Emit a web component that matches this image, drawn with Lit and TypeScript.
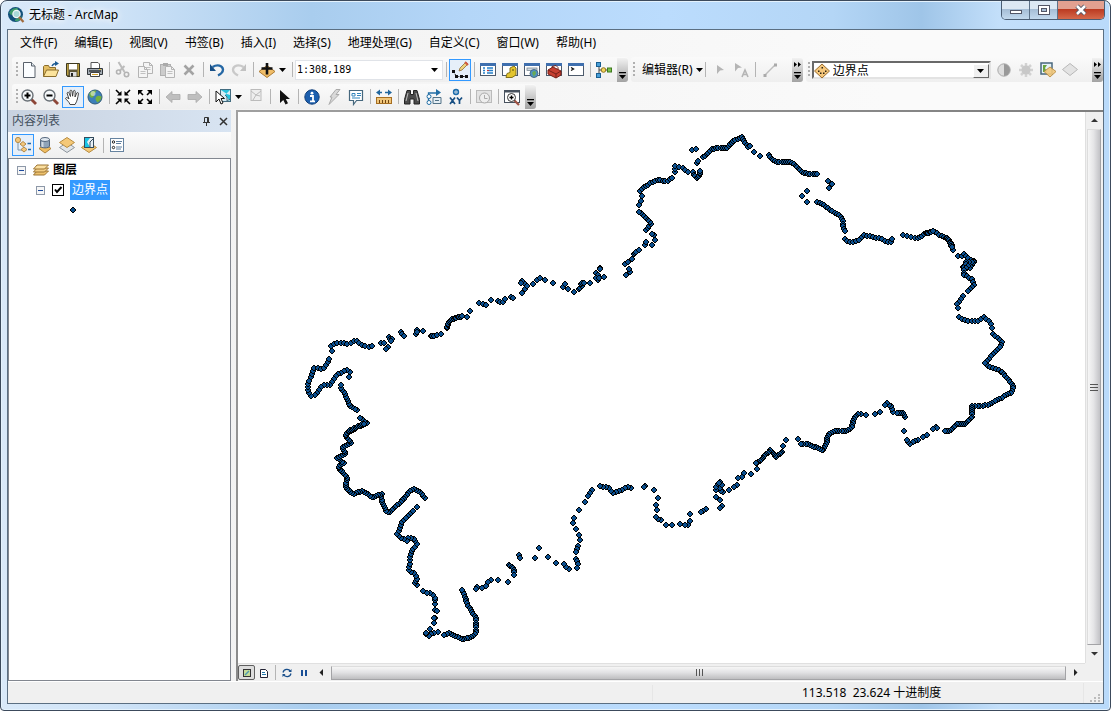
import { LitElement, html, svg, css } from "lit";
import { customElement, state } from "lit/decorators.js";
import { classMap } from "lit/directives/class-map.js";

type Icon = unknown;
type Item = "sep" | { label: string; icon: Icon; on?: boolean; off?: boolean; caret?: boolean };

const windowIcon = (body: Icon): Icon => svg`
  <rect x=".5" y="1.500" width="15" height="12" fill="#fff" stroke="#4d5a6b"/>
  <rect x="0" y="1" width="16" height="3" fill="#3f6fae"/>${body}`;
const page = (x: number, y: number, c: string): Icon => svg`
  <path d="M${x} ${y}h6l3 3v8h-9z" fill="#f4f4f4" stroke="${c}"/><path d="M${x + 6} ${y}v3h3" fill="none" stroke="${c}"/>
  <path d="M${x + 2} ${y + 5}h5M${x + 2} ${y + 7}h5" stroke="${c}" stroke-width=".8"/>`;
const lens = (body: Icon): Icon => svg`
  <path d="M10 10l5 5" stroke="#8d4638" stroke-width="2.800"/>
  <circle cx="6.500" cy="6.500" r="5.500" fill="#f5f8fa" stroke="#6a7177" stroke-width="1.400"/>${body}`;
const plus = svg`<path d="M3.500 6.500h6M6.500 3.500v6" stroke="#000" stroke-width="2"/>`;
const layer = (y: number, a: string, b: string): Icon =>
  svg`<path d="M8 ${y}l7.500 5-7.500 5-7.500-5z" fill="${a}" stroke="${b}"/>`;

const I = {
  logo: svg`<circle cx="7.500" cy="7.500" r="7.500" fill="#12507a"/><path d="M1 6c2-4 5-5 8-5 2 1 1 3-1 3s-2 4-4 4-2-2-3-2zM7 13c1-2 5-2 7-4-1 4-4 6-7 5z" fill="#3d9a6a"/><circle cx="8.500" cy="7" r="3.600" fill="#a9d9d8" stroke="#f2f6f8" stroke-width="1.300"/><path d="M11 10l4.500 5" stroke="#a06a3c" stroke-width="2.200"/>`,
  new: svg`<path d="M2.500 .5h8l3.500 3.500v11.500h-11.500z" fill="#fbfdff" stroke="#59616b"/><path d="M10.500 .5v3.500h3.500" fill="#dfe7ee" stroke="#59616b"/>`,
  open: svg`<path d="M.5 14.500v-10l1-1h4l1 2h6v3" fill="#e3bd62" stroke="#8a6d2c"/><path d="M.5 14.500l3-6.500h12l-2.500 6.500z" fill="#fbe39c" stroke="#8a6d2c"/><path d="M9 4c1-2 2-2.500 4-2.500" stroke="#1d5b93" stroke-width="1.500" fill="none"/><path d="M12 -1l4 2.500-4 2.500z" fill="#1d5b93"/>`,
  save: svg`<path d="M1.500 1.500h13v13h-12l-1-1z" fill="#5d5537" stroke="#3d381f"/><rect x="4" y="2" width="8" height="5.500" fill="#fff"/><rect x="2" y="2" width="1.500" height="11" fill="#b89d42"/><rect x="12.500" y="2" width="1.500" height="12" fill="#b89d42"/><rect x="5" y="10" width="6.500" height="4.500" fill="#ddd"/><rect x="6" y="11" width="2" height="3.500" fill="#222"/>`,
  print: svg`<path d="M4 6v-5.500h7l1.500 1.500v4" fill="#fff" stroke="#555"/><path d="M.5 6.500h15v6h-15z" fill="#a3abb3" stroke="#33383d"/><path d="M2 9h12" stroke="#33383d" stroke-width="1.500"/><path d="M3.500 10.500h9v4h-9z" fill="#fff" stroke="#444"/><path d="M5 12.500h6" stroke="#d3a02b"/><rect x="12" y="7" width="2" height="1" fill="#e4c43d"/>`,
  cut: svg`<path d="M3.500 0l6 10M9.500 4l-5 5" stroke="#bcbcbc" stroke-width="2"/><circle cx="3.500" cy="10" r="2" fill="none" stroke="#b3b3b3" stroke-width="1.600"/><circle cx="11.500" cy="12.500" r="2.200" fill="none" stroke="#b3b3b3" stroke-width="1.600"/>`,
  copy: svg`${page(6.5, 0.5, "#b4b4b4")}${page(1.5, 4.5, "#b4b4b4")}`,
  paste: svg`<rect x="1.500" y="2.500" width="10" height="11" fill="#ccc" stroke="#b0b0b0"/><rect x="4" y="1" width="5" height="3" fill="#aaa"/>${page(6.5, 4.5, "#b4b4b4")}`,
  del: svg`<path d="M3.500 3.500l9 9M12.500 3.500l-9 9" stroke="#a3a3a3" stroke-width="2.600"/>`,
  undo: svg`<path d="M3.500 5c5-3 10-1.500 10.500 2.500 0 3-2 4.500-5 6" fill="none" stroke="#2568a5" stroke-width="2.300"/><path d="M1 2v7h6z" fill="#184f86"/>`,
  redo: svg`<path d="M12.500 5c-5-3-10-1.500-10.500 2.500 0 3 2 4.500 5 6" fill="none" stroke="#c9c9c9" stroke-width="2.300"/><path d="M15 2v7h-6z" fill="#c2c2c2"/>`,
  add: svg`<path d="M8 3.500l8 6-8 6-8-6z" fill="#f0bd68" stroke="#ad7b32"/><path d="M8 1v11.500M2.500 6.500h11" stroke="#111" stroke-width="2.600"/>`,
  editor: svg`<path d="M1.500 9.500l3 5h9.500" fill="none" stroke="#111" stroke-dasharray="2 1"/><path d="M0 8h3v3h-3zM3 13h3v3h-3zM8 13h3v3h-3zM13 13h3v3h-3z" fill="#111"/><path d="M7 9l1-3 6-6 2 2-6 6z" fill="#eed27c" stroke="#8d6b32" stroke-width=".8"/><path d="M13 0l3 3" stroke="#d2593f" stroke-width="2"/>`,
  toc: windowIcon(svg`<path d="M3 6h2M3 8.500h2M3 11h2M7 6h6M7 8.500h6M7 11h6" stroke="#2680c9" stroke-width="1.300"/><path d="M7 8.500h2" stroke="#c33"/>`),
  catalog: windowIcon(svg`<path d="M8 6l4-2 2 2v7l-4 2.500h-6l1-4 3-1z" fill="#e3c52e" stroke="#85721a"/><circle cx="11" cy="8" r="1" fill="#85721a"/>`),
  search: windowIcon(svg`<rect x="3" y="6" width="10" height="2.500" fill="#d3dae0" stroke="#7b8894" stroke-width=".8"/><circle cx="10" cy="11.500" r="4" fill="#4d91c6" stroke="#496b86"/><path d="M8 11c2-3 4-2 4 0s-2 2-2 4z" fill="#68a958"/>`),
  toolbox: windowIcon(svg`<path d="M2 8l5-3 8 4v4l-5 3-8-4z" fill="#c73f31" stroke="#762119"/><path d="M2 8l8 4 5-3M10 12v4M6 6v-1.500l4-1 2 2v2" fill="none" stroke="#762119"/>`),
  python: windowIcon(svg`<path d="M3 5.500l2.500 1.500-2.500 1.500" fill="none" stroke="#111" stroke-width="1.300"/>`),
  model: svg`<path d="M3 3v10M3 8h10" stroke="#444"/><rect x="0.500" y="0.500" width="4" height="4" fill="#499fd8" stroke="#195f91"/><rect x="0.500" y="11.500" width="4" height="4" fill="#499fd8" stroke="#195f91"/><circle cx="7.500" cy="8" r="2.300" fill="#f5d65b" stroke="#8f7420"/><rect x="11.500" y="6" width="4" height="4" fill="#7ec24c" stroke="#3e7a1e"/>`,
  arrowOff: svg`<path d="M5 3l7 5-4 .5-3 3.500z" fill="#b5b5b5"/>`,
  arrowA: svg`<path d="M1 1l7 4.500-4 .5-3 3.500z" fill="#b5b5b5"/><path d="M8 15l3-7 3 7M9 12.500h4" stroke="#b5b5b5" stroke-width="1.600" fill="none"/>`,
  segment: svg`<path d="M3 13l10-10" stroke="#bdbdbd" stroke-width="1.500"/><rect x="1.500" y="12" width="3" height="3" fill="#aaa"/><rect x="12" y="1.500" width="3" height="3" fill="#aaa"/>`,
  contrast: svg`<circle cx="8" cy="8" r="6.200" fill="#ddd" stroke="#aaa"/><path d="M8 2a6 6 0 0 1 0 12z" fill="#999"/>`,
  bright: svg`<path d="M8 1v14M1 8h14M3 3l10 10M13 3l-10 10" stroke="#d2d2d2" stroke-width="2.500"/><circle cx="8" cy="8" r="4.500" fill="#c8c8c8"/>`,
  image: svg`<rect x="1" y="1" width="11" height="11" fill="#e7f2f8" stroke="#48677e" stroke-width="1.500"/><path d="M3 3h4l-2 3 2 4h-4z" fill="#68a33e"/><path d="M10 5l6 4.500-6 5.500-6-5.500z" fill="#f3c87a" stroke="#b98c40" opacity=".9"/>`,
  rhomb: svg`<path d="M8 1.500l7.500 6-7.500 6-7.500-6z" fill="#e3e3e3" stroke="#b8b8b8"/>`,
  zoomIn: lens(plus),
  zoomOut: lens(svg`<path d="M3.500 6.500h6" stroke="#000" stroke-width="2"/>`),
  pan: svg`<path d="M5 15.500c-1-3-3-4-4.500-6 .5-1.500 2-1 3.500.5l-2-6c.8-1.300 1.800-.8 2.200.5l1.300 3-.6-5.500c.6-1.300 1.800-1 2 .2l.7 5 .7-5.200c.8-1 1.900-.7 1.900.5l-.2 5.500 1.800-4c1-.9 2-.2 1.600 1-.6 3-1 7-3.400 10.500z" fill="#fff" stroke="#333" stroke-width=".9"/>`,
  globe: svg`<circle cx="8" cy="8" r="7" fill="#3c7fb9" stroke="#315b78"/><path d="M2 5c2-3 5-4 7-3.500 1 2-2 2-2 4s-1 4-3 3-1-2-2-3.500zM9 8c2-2 4-1 5.500-.5 0 3-2 5-4 6-2-2-2.500-4-1.500-5.500z" fill="#73b03f"/><circle cx="6" cy="4.500" r="2.500" fill="#fff" opacity=".5"/>`,
  shrink: svg`<path d="M1 1l4 4M15 1l-4 4M1 15l4-4M15 15l-4-4" stroke="#000" stroke-width="1.600"/><path d="M6.500 2v4.500h-4.500zM9.500 2v4.500h4.500zM6.500 14v-4.500h-4.500zM9.500 14v-4.500h4.500z"/>`,
  grow: svg`<path d="M2 2l4 4M14 2l-4 4M2 14l4-4M14 14l-4-4" stroke="#000" stroke-width="1.600"/><path d="M1 1h5l-5 5zM15 1h-5l5 5zM1 15h5l-5-5zM15 15h-5l5-5z"/>`,
  back: svg`<path d="M1 8l6-5.500v3h8v5h-8v3z" fill="#bfbfbf" stroke="#aaa" stroke-width=".8"/>`,
  fwd: svg`<path d="M15 8l-6-5.500v3h-8v5h8v3z" fill="#bfbfbf" stroke="#aaa" stroke-width=".8"/>`,
  select: svg`<rect x="5.500" y=".5" width="10" height="12" fill="#d8edf4" stroke="#426c80"/><path d="M6 1h9l-5 5 5 6v-6l-3-1z" fill="#27c2dd"/><path d="M10 6l2 2v4l3-2" stroke="#426c80" fill="none"/><path d="M1 2v11l3-3 2 5 2-1-2-4.500h3.500z" fill="#fff" stroke="#111"/>`,
  clear: svg`<rect x="3" y="0.500" width="10" height="11" fill="#eee" stroke="#bbb"/><path d="M3 2l5 4-3 5M8 6l5-4M8 6l4 1" stroke="#bbb" fill="none"/>`,
  pointer: svg`<path d="M4 1v13l3.300-3 2.200 4.500 2.500-1.200-2.200-4.300h4.200z" fill="#111"/>`,
  info: svg`<circle cx="8" cy="8" r="7.200" fill="#1c5fae" stroke="#113f7a"/><circle cx="8" cy="4.200" r="1.400" fill="#fff"/><path d="M6 7h3v5M6 12.300h5" stroke="#fff" stroke-width="1.800" fill="none"/>`,
  bolt: svg`<path d="M10 .5h4l-4 5h3l-10 10 3-7.500h-2z" fill="#d9d9d9" stroke="#aaa"/>`,
  popup: svg`<path d="M1.500 1.500h13v10h-6l-3 4v-4h-4z" fill="#fff" stroke="#46687e" stroke-width="1.200"/><path d="M4 4.500h3v2.500h-3zM9 4.500h4M9 6.500h4M4 9h8" stroke="#3285bd" fill="none"/>`,
  measure: svg`<path d="M2 3.500h12" stroke="#22679e" stroke-width="1.600" stroke-dasharray="4 3"/><path d="M0 3.500l4-3v6zM16 3.500l-4-3v6z" fill="#22679e"/><rect x=".5" y="8.500" width="15" height="6" fill="#f0c579" stroke="#a66e21"/><path d="M3.500 11v3M6.500 11v3M9.500 11v3M12.500 11v3" stroke="#6f4511"/>`,
  find: svg`<path d="M3 1.500h3.500v4h3v-4h3.500l2.500 9v4.500h-5.500v-5h-4v5h-5.500v-4.500z" fill="#4b4b4b" stroke="#222"/><path d="M4 4l-2 8M12 4l2 8" stroke="#bbb"/>`,
  route: svg`<path d="M2.500 13v-9h9" stroke="#236fa6" fill="none" stroke-width="1.300"/><path d="M10 0l5 3.500-5 3.500z" fill="#236fa6"/><circle cx="3" cy="7.500" r="2" fill="#fff" stroke="#236fa6"/><circle cx="3" cy="13.500" r="2" fill="#fff" stroke="#236fa6"/><path d="M7 8.500h8v6h-8z" fill="#e5eef4" stroke="#527287"/><path d="M9 11.500h4" stroke="#527287"/>`,
  xy: svg`<circle cx="8" cy="3" r="2.400" fill="none" stroke="#1c6cab" stroke-width="1.600"/><circle cx="8" cy="3" r=".8" fill="#1c6cab"/><path d="M2 8.500l5 6.500M7 8.500l-5 6.500M9 8.500l2.500 3 2.500-3M11.500 11v4" stroke="#174f83" stroke-width="1.700" fill="none"/>`,
  time: svg`<rect x=".5" y="1.500" width="15" height="12" fill="#e3e3e3" stroke="#bbb"/><circle cx="8.500" cy="9" r="5" fill="#eee" stroke="#aaa"/><path d="M8.500 6v3.500h3" stroke="#aaa" fill="none"/>`,
  viewer: svg`<rect x=".5" y="1.500" width="15" height="12" fill="#fff" stroke="#47515d"/><path d="M1 2.500h14" stroke="#47515d" stroke-width="2"/><path d="M10 11l5 5" stroke="#a05242" stroke-width="2.200"/><circle cx="7.500" cy="8.500" r="4" fill="#fff" stroke="#333"/><path d="M5.500 8.500h4M7.500 6.500v4" stroke="#000" stroke-width="1.400"/>`,
  listOrder: svg`<path d="M3 4v9h5M5 7h4" stroke="#7d93a8" fill="none"/><circle cx="3" cy="3" r="2.600" fill="#f3c77c" stroke="#b48b49"/><path d="M8 4.500l3 2.500-3 2.500-3-2.500zM9 10l3 2.500-3 2.500-3-2.500z" fill="#f3c77c" stroke="#b48b49"/><path d="M12.500 6.500h3.500M13 12.500h3" stroke="#2568a5" stroke-width="1.500"/>`,
  listSource: svg`<path d="M8 7l6 4.500-6 4.500-6-4.500z" fill="#f0bd61" stroke="#b0833a"/><path d="M3.500 2.500v6.500c0 2.500 9 2.500 9 0v-6.500z" fill="#8fa3b8" stroke="#55677d"/><ellipse cx="8" cy="2.500" rx="4.500" ry="2" fill="#e0e8f0" stroke="#55677d"/><path d="M5.500 5v5" stroke="#fff" stroke-width="2" opacity=".6"/>`,
  listVisible: svg`${layer(5.5, "#e1e5e8", "#8e969e")}${layer(0.5, "#f4c878", "#b88d42")}`,
  listSelected: svg`${layer(5.5, "#f4c878", "#b88d42")}<rect x="3.500" y=".5" width="9" height="10" fill="#e7eff5" stroke="#344b5c"/><path d="M4 1h5l-3 4 3 5h-5z" fill="#19c3e5"/><path d="M9 5l3-3M9 5v5" stroke="#344b5c"/>`,
  options: svg`<rect x="1.500" y="1.500" width="13" height="13" fill="#fff" stroke="#6683a0"/><circle cx="4.500" cy="5" r="1.200" fill="none" stroke="#222"/><circle cx="4.500" cy="10.500" r="1.200" fill="none" stroke="#222"/><path d="M7 4.500h6M7 6.500h5M7 10h6M7 12h5" stroke="#5f7f9f"/>`,
  layers: svg`<path d="M4 9h11.500l-4 4h-11z" fill="#eec26e" stroke="#9c7432"/><path d="M4 6h11.500l-4 4h-11z" fill="#f4cf86" stroke="#9c7432"/><path d="M4 3h11.500l-4 4h-11z" fill="#fbdf9f" stroke="#9c7432"/>`,
  points: svg`<path d="M8 1l7.500 7-7.500 7-7.500-7z" fill="#f5c77c" stroke="#9b6e2e"/><path d="M7.500 4h1.500v1.500h-1.500zM4 7.500h1.500v1.500h-1.500zM11 7.500h1.500v1.500h-1.500zM6 9.500h1.500v1.500h-1.500zM9 9.500h1.500v1.500h-1.500z" fill="#2b2111"/>`,
};

const NEW = (label: string, icon: Icon, extra = {}): Item => ({ label, icon, ...extra });
const off = { off: true };

const FILE_BAR: Item[] = [
  NEW("新建", I.new), NEW("打开", I.open), NEW("保存", I.save), NEW("打印", I.print), "sep",
  NEW("剪切", I.cut, off), NEW("复制", I.copy, off), NEW("粘贴", I.paste, off), NEW("删除", I.del, off), "sep",
  NEW("撤消", I.undo), NEW("恢复", I.redo, off), "sep",
  NEW("添加数据", I.add, { caret: true }), "sep",
];
const WINDOW_BAR: Item[] = [
  "sep", NEW("编辑器工具条", I.editor, { on: true }), "sep",
  NEW("内容列表", I.toc), NEW("目录", I.catalog), NEW("搜索", I.search), NEW("工具箱", I.toolbox), NEW("Python", I.python), "sep",
  NEW("模型构建器", I.model),
];
const EDIT_BAR: Item[] = ["sep", NEW("编辑", I.arrowOff, off), NEW("编辑注记", I.arrowA, off), "sep", NEW("直线段", I.segment, off)];
const EFFECT_BAR: Item[] = [NEW("对比度", I.contrast, off), NEW("亮度", I.bright, off), NEW("透明度", I.image), NEW("卷帘", I.rhomb, off)];
const TOOLS_BAR: Item[] = [
  NEW("放大", I.zoomIn), NEW("缩小", I.zoomOut), NEW("平移", I.pan, { on: true }), NEW("全图", I.globe), "sep",
  NEW("固定比例放大", I.shrink), NEW("固定比例缩小", I.grow), "sep",
  NEW("上一视图", I.back, off), NEW("下一视图", I.fwd, off), "sep",
  NEW("选择要素", I.select, { caret: true }), NEW("清除选择", I.clear, off), "sep",
  NEW("选择元素", I.pointer), "sep",
  NEW("识别", I.info), NEW("超链接", I.bolt, off), NEW("HTML 弹出窗口", I.popup), "sep",
  NEW("测量", I.measure), "sep",
  NEW("查找", I.find), NEW("查找路径", I.route), NEW("转到 XY", I.xy), "sep",
  NEW("时间滑块", I.time, off), "sep",
  NEW("查看器窗口", I.viewer),
];
const LIST_BAR: Item[] = [
  NEW("按绘制顺序列出", I.listOrder, { on: true }), NEW("按源列出", I.listSource), NEW("按可见性列出", I.listVisible),
  NEW("按选择列出", I.listSelected), "sep", NEW("选项", I.options),
];
const MENUS = ["文件(F)", "编辑(E)", "视图(V)", "书签(B)", "插入(I)", "选择(S)", "地理处理(G)", "自定义(C)", "窗口(W)", "帮助(H)"];

/* Boundary runs: marker spacing, then vertices. Spacing 0 places a marker on each vertex only. */
const RUNS: [number, string][] = [
  [3.5, "331,346 335,343 344,343 348,344 352,342 356,340 358,342 362,345 367,347 374,346"],
  [0, "332,351 381,343 384,343 389,337 390,339 392,339 391,341 388,347 386,349 401,332 402,334 404,336 417,330 423,331 416,334 417,332 431,336 432,336 434,336 437,335 441,334"],
  [1.5, "447,328 448,324 451,320 455,318 460,317 463,316"],
  [0, "467,317 470,311 479,303 483,304 486,305 491,300 498,301 500,302 503,302 505,299 511,297 513,298 522,293 525,289 527,286 524,283 522,281 521,283 533,284 537,280 540,278 545,280 553,283 563,287 565,284 568,289 574,292"],
  [2, "579,289 582,286 581,284 586,282"],
  [0, "590,283 598,280 596,273 598,275 600,268 600,269 604,277 596,278 599,278 626,275 630,272 629,269 625,264 628,262 632,259 634,254 635,253 636,252 639,250 645,245 646,242 652,245 655,240 654,235 652,234"],
  [2.5, "646,230 651,224 647,219 643,215 638,211"],
  [0, "639,205 641,201 642,196"],
  [2.6, "640,191 644,187 649,184 654,182 658,180 662,181 667,181 670,179 674,178"],
  [0, "675,172 675,169 675,166 679,167 683,168 685,170 688,172 693,172 697,163 698,161 692,150 696,149"],
  [1.8, "694,175 697,178 700,175 700,170"],
  [2.3, "703,157 707,154 712,149 717,148 727,148 730,145 733,141 738,139 742,137 745,142 748,147 750,146"],
  [0, "754,152 760,156 828,181 832,184 829,188 807,191 802,196 807,202"],
  [2.2, "769,155 772,159 777,162 791,162 795,165 800,170 804,173 810,174 819,174"],
  [2.6, "817,202 821,203 825,206 832,211 837,214 842,217 843,225 845,232"],
  [3.2, "845,239 848,242 853,242 859,240 864,235 873,237 882,239 890,243 893,237"],
  [4, "903,235 909,237 913,238 918,238"],
  [2.4, "918,238 925,234 933,231 940,235 947,238 951,243 953,250"],
  [1.5, "927,233 933,231"],
  [1.5, "947,238 950,242 952,248"],
  [0, "958,256"],
  [3, "962,256 964,254 968,258 975,262 966,264 962,267 970,268 974,262 965,262 968,267 964,270 964,275"],
  [3, "964,275 972,279 974,284 967,292"],
  [3.5, "963,296 957,304 958,309"],
  [3.4, "959,317 967,321 978,321 983,317 990,322 992,328"],
  [3.1, "993,334 997,337 1002,341 1001,346 993,354 985,363 989,367 997,369 1002,372"],
  [2.6, "1002,372 1008,379 1014,387 1012,392 997,400 990,404 982,406 972,406"],
  [2.1, "972,406 972,417 965,424 957,424 950,431 943,431"],
  [0, "936,427 937,428 933,429 927,435 923,437 918,440 904,431"],
  [2.8, "915,441 910,444 905,438"],
  [2, "905,417 903,413 897,413"],
  [3, "893,412 892,407 887,403 884,406"],
  [0, "880,412 875,414 866,415 861,414"],
  [2.2, "858,414 854,418 852,427 846,431 835,431 828,435 826,445 823,451 815,447 807,444 800,444"],
  [0, "798,439 786,440 783,446 757,469 751,474 744,473 742,477 738,478 737,485 734,487 729,490 723,492 721,491 720,488 716,490 716,487 720,482 722,485 718,484 719,483 716,497 720,500 722,506 720,508 706,509 703,511 701,512"],
  [1.6, "782,452 776,457 770,450 763,458 755,464"],
  [0, "690,514 690,521 688,525 685,525 680,524 672,525 666,525 661,520 658,519 656,517 657,510 656,505 658,498 654,490 645,486 644,487"],
  [3.2, "631,488 628,487 621,490 613,493 608,487 598,486"],
  [0, "592,490 590,493 588,496 585,502 579,510 574,518 573,523 576,529 579,535 580,540 578,546 577,549 576,552 576,559 577,561 578,564 577,568 569,569 566,567 564,564 556,563 548,557 539,548 535,558 519,555 520,558"],
  [1.8, "509,565 513,568 515,573"],
  [0, "514,575 508,582 498,580 491,580 488,582 486,586 482,588 477,587 476,589"],
  [2.4, "462,590 468,605 476,618 476,633 472,637 462,639 450,633 443,635"],
  [0, "462,590 438,632 434,633 431,634 429,636 426,634 426,633 430,629 434,623 435,618 434,618 435,610 437,611 435,604 435,600 435,598 433,595 430,593 427,593 423,591"],
  [3.1, "417,585 414,582 417,580 415,574 409,570 410,559 412,550 417,545 414,539 408,538 407,541 403,539 397,534 399,530 402,522 408,516 413,511"],
  [0, "417,507"],
  [2.4, "425,498 420,492 413,489 407,494 402,501 397,505 390,512 387,512 382,502 381,496"],
  [2.2, "382,494 372,497 362,491 353,494 346,488 347,477 338,467 344,463 337,458 346,453 342,448 351,443 345,435 357,427 367,423 359,417"],
  [1.5, "349,431 357,427 365,423"],
  [2.6, "357,410 350,406 345,393 341,388 341,385"],
  [0, "349,377"],
  [3.4, "350,372 347,370 341,373 337,374 335,378 330,385 324,385 320,388 315,395 311,396 308,392 308,383 312,375 314,368 322,369 327,365 330,357"],
];
const MARK = "m-1-3h2v1h1v1h1v2h-1v1h-1v1h-2v-1h-1v-1h-1v-2h1v-1h1z";
const CORE = "m-1-2h2v1h1v2h-1v1h-2v-1h-1v-2h1z";

function markers(): [number, number][] {
  const out: [number, number][] = [];
  for (const [step, text] of RUNS) {
    const v = text.split(" ").map((p) => p.split(",").map(Number));
    if (!step) {
      v.forEach(([x, y]) => out.push([x, y]));
      continue;
    }
    let left = 0;
    for (let i = 1; i < v.length; i++) {
      const [ax, ay] = v[i - 1];
      const dx = v[i][0] - ax;
      const dy = v[i][1] - ay;
      const len = Math.hypot(dx, dy);
      let d = left;
      for (; d <= len; d += step) out.push([Math.round(ax + (dx * d) / len), Math.round(ay + (dy * d) / len)]);
      left = d - len;
    }
  }
  return out;
}

const glyph = (icon: Icon) => html`<svg class="ic" viewBox="0 0 16 16" aria-hidden="true">${icon}</svg>`;
const down = html`<svg class="tri" viewBox="0 0 7 4" aria-hidden="true"><path d="M0 0h7l-3.500 4z"/></svg>`;

const shared = css`
  :host { box-sizing: border-box; }
  *, *::before, *::after { box-sizing: border-box; }
  button, select, input { font: inherit; color: inherit; margin: 0; padding: 0; border: 0; background: none; border-radius: 0; }
  svg { display: block; }
  .ic { width: 16px; height: 16px; overflow: visible; }
  .tri { width: 7px; height: 4px; }
  .items { display: flex; align-items: center; }
  .tool { display: flex; align-items: center; justify-content: center; width: 22px; height: 22px; flex: none; }
  .tool.on { border: 1px solid #3399ff; background: #e6eff9; }
  .tool.caret { width: 33px; justify-content: flex-start; gap: 4px; padding-left: 3px; }
  .sep { width: 6px; height: 15px; flex: none; display: flex; justify-content: center; }
  .sep::before { content: ""; width: 1px; background: #b4b4b4; }
`;

@customElement("tool-items")
class ToolItems extends LitElement {
  static properties = { items: { attribute: false } };
  declare items: Item[];
  static styles = [shared, css`:host { display: block; flex: none; }`];
  render() {
    return html`<div class="items">${this.items.map((it) =>
      it === "sep"
        ? html`<span class="sep"></span>`
        : html`<button class=${classMap({ tool: true, on: !!it.on, caret: !!it.caret })} ?disabled=${!!it.off}
            title=${it.label} aria-label=${it.label}>${glyph(it.icon)}${it.caret ? down : ""}</button>`)}</div>`;
  }
}

@customElement("point-map")
class PointMap extends LitElement {
  static styles = [shared, css`
    :host { display: block; background: #fff; min-width: 0; min-height: 0; overflow: hidden; }
    .canvas { width: 100%; height: 100%; }
    .mark { fill: #000; }
    .core { fill: #0b4f8f; }
  `];
  render() {
    return html`<svg class="canvas" viewBox="238 112 847 551" preserveAspectRatio="xMidYMid meet" shape-rendering="crispEdges" role="img" aria-label="边界点">
      ${markers().map(([x, y]) => svg`<path class="mark" d="M${x} ${y}${MARK}"/><path class="core" d="M${x} ${y}${CORE}"/>`)}
    </svg>`;
  }
}

@customElement("app-root")
class AppRoot extends LitElement {
  @state() private shown = true;

  static styles = [shared, css`
    :host {
      display: flex; flex-direction: column; height: 100vh; padding: 0 6px 6px; overflow: hidden;
      border: 1px solid #3c4a5c; border-radius: 7px 7px 4px 4px; box-shadow: inset 0 0 0 1px #e4f2fd;
      background: linear-gradient(90deg, #d9e9f9 0, #cfe3f7 10%, #a9cdee 28%, #b4d6f8 42%, #bbdcfd 60%, #b4d6f6 75%, #9fc5e8 83%, #c3dffa 90%, #b9dafa 100%);
      color: #000; font: 12px/20px "Noto Sans", "Noto Sans CJK SC", sans-serif;
    }
    .title { display: flex; height: 28px; flex: none; align-items: center; gap: 5px; padding-left: 1px; margin-right: -1px; }
    .title h1 { flex: 1; margin: 0; font: inherit; text-shadow: 0 0 6px #fff, 0 0 10px #fff; }
    .sys { display: flex; align-self: flex-start; height: 19px; border: 1px solid #4a5d73; border-top: 0; border-radius: 0 0 5px 5px; overflow: hidden; }
    .sys button { width: 28px; display: grid; place-items: center; background: linear-gradient(#dce8f3 0 45%, #a5bdd5 46%, #c2d9ee); border-right: 1px solid #5c7188; }
    .sys .close { width: 46px; border: 0; background: linear-gradient(#e2a090 0 45%, #bb3a21 46%, #d5694b); }
    .sys svg { width: 14px; height: 12px; }

    .client { flex: 1; min-height: 0; display: flex; flex-direction: column; border: 1px solid #5b6f82; background: linear-gradient(90deg, #f0f0f0, #fafafa 80%); }
    .menu { display: flex; height: 26px; flex: none; align-items: center; gap: 17px; padding-left: 12px; }
    .menu button { height: 22px; line-height: 22px; white-space: nowrap; }
    .bars { display: flex; height: 27px; flex: none; align-items: center; padding-left: 4px; }
    .bar { display: flex; height: 25px; align-items: center; flex: none; background: linear-gradient(#fafafa, #efefef); border-radius: 3px; padding-left: 6px; }
    .bar.fill { flex: 1; min-width: 0; }
    .bar.next { margin-left: 3px; }
    .grip { width: 2px; height: 15px; flex: none; margin-right: 0; margin-left: -2px; background: repeating-linear-gradient(#b0b0b0 0 2px, transparent 2px 4px); }
    .bar.next .grip { margin-right: 7px; margin-left: -4px; }
    .bar.fill .grip { margin-right: 2px; }
    .more { width: 11px; height: 24px; flex: none; margin-left: 2px; display: flex; flex-direction: column; justify-content: space-between; align-items: center; padding: 4px 0 3px; background: linear-gradient(#f2f2f2, #a2a2a2); border-radius: 0 3px 3px 0; }
    .more svg { width: 7px; height: 7px; }
    .more .up { height: 5px; }
    .bar.fill .more { margin-left: auto; }
    .room { margin-left: 9px; }
    .word { display: flex; align-items: center; gap: 3px; white-space: nowrap; }
    .pick { display: grid; align-items: center; }
    .pick > * { grid-area: 1 / 1; }
    .pick select { appearance: none; width: 100%; outline: 0; }
    .scale { width: 148px; height: 20px; background: #fff; border: 1px solid #e0e3e8; }
    .scale select { height: 18px; padding-left: 1px; font: 10px/18px "DejaVu Sans Mono", monospace; }
    .pick .tri { justify-self: end; margin-right: 4px; pointer-events: none; }
    .target { flex: 1; max-width: 179px; min-width: 90px; height: 18px; background: #fff; border: 2px solid; border-color: #696969 #e3e3e3 #e3e3e3 #696969; margin-right: 2px; }
    .target select { height: 14px; line-height: 14px; padding-left: 19px; }
    .pick .drop { justify-self: end; width: 16px; height: 14px; display: grid; place-items: center; background: #f0f0f0; border: 1px solid; border-color: #fff #696969 #696969 #fff; pointer-events: none; }
    .pick .drop .tri { margin: 0; justify-self: center; }
    .pick .ic { pointer-events: none; }

    .work { flex: 1; min-height: 0; display: grid; grid-template-columns: 223px minmax(0, 1fr); gap: 5px; }
    .toc { display: flex; flex-direction: column; min-height: 0; }
    .cap { display: flex; align-items: center; gap: 8px; height: 22px; flex: none; padding: 0 3px 0 4px; background: linear-gradient(90deg, #c8d2e0, #d8e4f2); color: #43505e; }
    .cap h2 { flex: 1; margin: 0; font: inherit; }
    .cap svg { width: 9px; height: 9px; }
    .lists { display: flex; align-items: center; height: 26px; flex: none; padding-left: 4px; background: linear-gradient(#fcfcfc, #efefef); }
    .tree { flex: 1; margin: 0; padding: 1px 0 0 8px; list-style: none; background: #fff; border: 1px solid #828790; }
    .tree ul { margin: 0; padding: 0 0 0 19px; list-style: none; }
    .node { display: flex; align-items: center; height: 20px; }
    .node .box { width: 9px; height: 9px; margin-right: 7px; border: 1px solid #8d98a8; background: linear-gradient(#1c4a9c, #1c4a9c) center / 5px 1px no-repeat #f6f6f6; }
    .node .ic { margin-right: 4px; }
    .check { display: grid; width: 12px; height: 12px; margin-right: 6px; }
    .check > * { grid-area: 1 / 1; width: 12px; height: 12px; }
    .check input { appearance: none; border: 1px solid #000; background: #fff; }
    .check svg { pointer-events: none; }
    .node label.name { background: #3399ff; color: #fff; padding: 0 2px; height: 20px; line-height: 20px; }
    .symbol { padding-left: 34px; }
    .symbol svg { width: 6px; height: 6px; }

    .view { display: grid; grid-template: minmax(0, 1fr) 18px / minmax(0, 1fr) 18px; border: solid #696969; border-width: 2px 0 0 2px; border-image: linear-gradient(135deg, #a0a0a0, #696969) 1; background: #f0f0f0; min-height: 0; }
    .vbar { display: flex; flex-direction: column; padding: 0 2px 1px 1px; border-left: 1px solid #e0e0e0; }
    .vbar .thumb { flex: 1; display: grid; place-items: center; background: linear-gradient(90deg, #f6f6f6, #e6e6e8 45%, #c2c2c6); border: 1px solid #a3a3a6; border-left-color: #ddd; border-top-color: #ddd; }
    .vbar button, .hbar .step { height: 17px; display: grid; place-items: center; flex: none; background: #f0f0f0; }
    .hbar { display: flex; align-items: center; border-top: 1px solid #e0e0e0; }
    .hbar .step { width: 19px; }
    .hbar .thumb { flex: 1; height: 14px; display: grid; place-items: center; background: linear-gradient(#f6f6f6, #e2e2e4 45%, #bebec0); border: 1px solid #a3a3a6; border-top-color: #ddd; }
    .hbar .mode { width: 17px; height: 15px; display: grid; place-items: center; flex: none; }
    .hbar .mode.on { border: 1px solid #606060; border-radius: 2px; background: #ddd; }
    .hbar .mode svg { width: 10px; height: 10px; }
    .arrow { width: 7px; height: 7px; }
    .lines { width: 8px; height: 7px; }

    .status { display: flex; height: 22px; flex: none; align-items: center; background: #f0f0f0; border-top: 1px solid #fff; }
    .status .msg { flex: 1; }
    .status .blank { width: 140px; border-left: 1px solid #e6e6e6; height: 16px; }
    .status output { width: 292px; padding-left: 10px; white-space: pre; border-right: 1px solid #e6e6e6; }
    .status .size { width: 19px; height: 20px; }
    .status .size svg { width: 19px; height: 20px; }
  `];

  private more(arrows: boolean) {
    return html`<button class="more" aria-label="工具条选项">
      ${arrows ? html`<svg class="up" viewBox="0 0 7 5"><path d="M0 0l3 2.500-3 2.500zM4 0l3 2.500-3 2.500z"/></svg>` : html`<span></span>`}
      <svg viewBox="0 0 7 7"><path d="M0 0h7v1.300h-7zM0 3h7l-3.500 4z"/></svg></button>`;
  }

  render() {
    return html`
      <header class="title">
        ${glyph(I.logo)}
        <h1>无标题 - ArcMap</h1>
        <div class="sys">
          <button aria-label="最小化"><svg viewBox="0 0 14 12"><rect x="1.500" y="6.500" width="11" height="3" fill="#fff" stroke="#535666"/></svg></button>
          <button aria-label="最大化"><svg viewBox="0 0 14 12"><rect x="1.500" y="1.500" width="11" height="9" fill="#fff" stroke="#535666"/><rect x="4.500" y="4.500" width="5" height="3" fill="#a9bfd6" stroke="#535666"/></svg></button>
          <button class="close" aria-label="关闭"><svg viewBox="0 0 14 12"><path d="M3 2l8 8M11 2l-8 8" stroke="#535666" stroke-width="4.500"/><path d="M3 2l8 8M11 2l-8 8" stroke="#fff" stroke-width="2.500"/></svg></button>
        </div>
      </header>
      <div class="client">
        <nav class="menu">${MENUS.map((m) => html`<button>${m}</button>`)}</nav>
        <div class="bars">
          <div class="bar">
            <span class="grip"></span>
            <tool-items .items=${FILE_BAR}></tool-items>
            <div class="pick scale"><select aria-label="比例尺"><option>1:308,189</option></select>${down}</div>
            <tool-items .items=${WINDOW_BAR}></tool-items>
            ${this.more(false)}
          </div>
          <div class="bar next">
            <span class="grip"></span>
            <button class="word">编辑器(R) ${down}</button>
            <tool-items .items=${EDIT_BAR}></tool-items>
            <span class="room"></span>
            ${this.more(true)}
          </div>
          <div class="bar next fill">
            <span class="grip"></span>
            <div class="pick target"><select aria-label="图层"><option>边界点</option></select>${glyph(I.points)}<span class="drop">${down}</span></div>
            <tool-items .items=${EFFECT_BAR}></tool-items>
            ${this.more(true)}
          </div>
        </div>
        <div class="bars">
          <div class="bar">
            <span class="grip"></span>
            <tool-items .items=${TOOLS_BAR}></tool-items>
            ${this.more(false)}
          </div>
        </div>
        <main class="work">
          <section class="toc">
            <div class="cap">
              <h2>内容列表</h2>
              <button aria-label="自动隐藏"><svg viewBox="0 0 9 9"><path d="M2.500 5v-4.500h4v4.500M5.500 1v4M1 5.500h7M4.500 5.500v3.500" fill="none" stroke="#333"/></svg></button>
              <button aria-label="关闭"><svg viewBox="0 0 9 9"><path d="M1 1l7 7M8 1l-7 7" stroke="#333" stroke-width="1.500"/></svg></button>
            </div>
            <div class="lists"><tool-items .items=${LIST_BAR}></tool-items></div>
            <ul class="tree">
              <li>
                <div class="node"><button class="box" aria-label="折叠"></button>${glyph(I.layers)}<b>图层</b></div>
                <ul>
                  <li>
                    <div class="node">
                      <button class="box" aria-label="折叠"></button>
                      <span class="check">
                        <input id="vis" type="checkbox" .checked=${this.shown} @change=${(e: Event) => (this.shown = (e.target as HTMLInputElement).checked)} />
                        ${this.shown ? html`<svg viewBox="0 0 12 12"><path d="M3 5.500l2 2.500 4.500-5" fill="none" stroke="#000" stroke-width="2"/></svg>` : ""}
                      </span>
                      <label class="name" for="vis">边界点</label>
                    </div>
                    <div class="node symbol"><svg viewBox="-3 -3 6 6" shape-rendering="crispEdges"><path d="M0 0${MARK}"/><path d="M0 0${CORE}" fill="#0b4f8f"/></svg></div>
                  </li>
                </ul>
              </li>
            </ul>
          </section>
          <section class="view">
            <point-map></point-map>
            <div class="vbar">
              <button aria-label="向上"><svg class="arrow" viewBox="0 0 7 7"><path d="M0 5l3.500-3.500 3.500 3.500z" fill="#333"/></svg></button>
              <div class="thumb"><svg class="lines" viewBox="0 0 8 7"><path d="M0 .5h8M0 3.500h8M0 6.500h8" stroke="#555"/></svg></div>
              <button aria-label="向下"><svg class="arrow" viewBox="0 0 7 7"><path d="M0 2l3.500 3.500 3.500-3.500z" fill="#333"/></svg></button>
            </div>
            <div class="hbar">
              <button class="mode on" aria-label="数据视图"><svg viewBox="0 0 10 10"><rect x="1.500" y="1.500" width="7" height="7" fill="#c5dc9a" stroke="#333"/><path d="M3 7l4-4" stroke="#4f9bb0" stroke-width="1.500"/></svg></button>
              <button class="mode" aria-label="布局视图"><svg viewBox="0 0 10 10"><path d="M1.500 1.500h5l2 2v6h-7z" fill="#fff" stroke="#223"/><path d="M3 4.500h3M3 6.500h4" stroke="#27a"/></svg></button>
              <span class="sep"></span>
              <button class="mode" aria-label="刷新"><svg viewBox="0 0 10 10"><path d="M1 4.500c1-4 6-4 7.500-1M9 5.500c-1 4-6 4-7.500 1" fill="none" stroke="#194f8b" stroke-width="1.200"/><path d="M9.500 1v3h-3zM.5 9v-3h3z" fill="#194f8b"/></svg></button>
              <button class="mode" aria-label="暂停"><svg viewBox="0 0 10 10"><path d="M3 2v6M7 2v6" stroke="#1a4f96" stroke-width="2"/></svg></button>
              <button class="step" aria-label="向左"><svg class="arrow" viewBox="0 0 7 7"><path d="M5 0v7l-3.500-3.500z" fill="#222"/></svg></button>
              <div class="thumb"><svg class="lines" viewBox="0 0 8 7"><path d="M1.500 0v7M4.500 0v7M7.500 0v7" stroke="#555"/></svg></div>
              <button class="step" aria-label="向右"><svg class="arrow" viewBox="0 0 7 7"><path d="M2 0v7l3.500-3.500z" fill="#222"/></svg></button>
            </div>
          </section>
        </main>
        <footer class="status">
          <span class="msg"></span><span class="blank"></span>
          <output>113.518  23.624 十进制度</output>
          <span class="size"><svg viewBox="0 0 19 20"><path d="M14 11h2v2h-2zM10 14h2v2h-2zM14 14h2v2h-2zM6 17h2v2h-2zM10 17h2v2h-2zM14 17h2v2h-2z" fill="#bcbcbc"/></svg></span>
        </footer>
      </div>`;
  }
}
